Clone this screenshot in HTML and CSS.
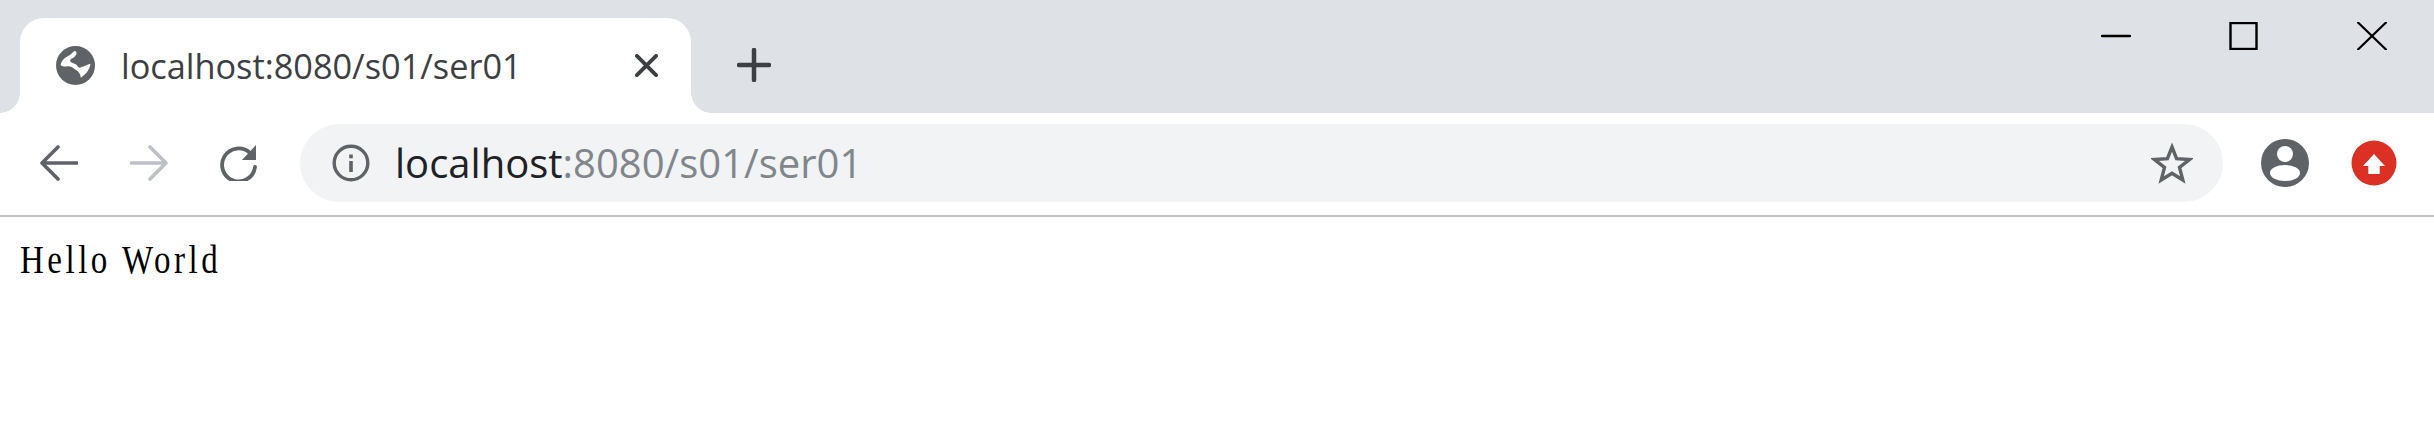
FILE: index.html
```html
<!DOCTYPE html>
<html lang="en">
<head>
<meta charset="utf-8">
<title>localhost:8080/s01/ser01</title>
<link rel="stylesheet" href="styles.css">
</head>
<body>
<header class="chrome">
  <div class="tabstrip">
    <div class="tab">
      <svg class="favicon" viewBox="17 16 118 118"><circle cx="76" cy="75" r="59" fill="#5f6368"/><path fill="#fff" d="M31 74C33 58 46 50 58 44C64 40 68 34 74 30C84 36 78 46 68 52C58 56 58 62 64 66L78 72C82 76 84 80 88 82C98 80 108 74 121 70C120 86 108 102 92 112C92 102 86 92 74 86C66 80 60 76 48 78C42 79 36 77 31 74Z"/></svg>
      <span class="tab-title">localhost:8080/s01/ser01</span>
      <svg class="tab-close" viewBox="0 0 24 24"><path d="M2 2L22 22M22 2L2 22" stroke="#3c4043" stroke-width="4" stroke-linecap="round" fill="none"/></svg>
    </div>
    <svg class="new-tab" viewBox="0 0 34 34"><path d="M17 2V32M2 17H32" stroke="#3c4043" stroke-width="4.5" stroke-linecap="round" fill="none"/></svg>
    <div class="window-controls">
      <svg class="win-icon" viewBox="0 0 30 28"><path d="M1 14H29" stroke="#000" stroke-width="2.4" stroke-linecap="round"/></svg>
      <svg class="win-icon" viewBox="0 0 30 28"><rect x="1.5" y="1" width="26" height="26" fill="none" stroke="#000" stroke-width="2.4"/></svg>
      <svg class="win-icon" viewBox="0 0 30 28"><path d="M1 0.5L29 27.5M29 0.5L1 27.5" stroke="#000" stroke-width="2.2" stroke-linecap="round"/></svg>
    </div>
  </div>
  <div class="toolbar">
    <svg class="nav-icon" viewBox="0 0 38 36"><path d="M37 18H3M18 2L2 18L18 34" stroke="#5f6368" stroke-width="3.6" stroke-linecap="round" stroke-linejoin="round" fill="none"/></svg>
    <svg class="nav-icon" viewBox="0 0 38 36"><path d="M1 18H35M20 2L36 18L20 34" stroke="#bdc1c6" stroke-width="3.6" stroke-linecap="round" stroke-linejoin="round" fill="none"/></svg>
    <svg class="nav-icon" viewBox="0 0 38 36"><path d="M30 8A16.5 16.5 0 1 0 35 22" stroke="#5f6368" stroke-width="3.8" stroke-linecap="round" fill="none"/><path d="M36 0V15H22Z" fill="#5f6368"/></svg>
    <div class="omnibox">
      <svg class="info-icon" viewBox="0 0 38 38"><circle cx="19" cy="19" r="16.8" stroke="#5f6368" stroke-width="3.4" fill="none"/><rect x="17.2" y="17" width="3.6" height="11" fill="#5f6368"/><rect x="17.2" y="10.5" width="3.6" height="3.8" fill="#5f6368"/></svg>
      <span class="url"><span class="url-host">localhost</span>:8080/s01/ser01</span>
      <svg class="star-icon" viewBox="0 0 42 42"><path d="M21 5L25.6 16.6L38.5 17.5L28.5 25.4L31.8 38L21 31.2L10.2 38L13.5 25.4L3.5 17.5L16.4 16.6Z" stroke="#5f6368" stroke-width="3.4" stroke-linejoin="miter" fill="none"/></svg>
    </div>
    <svg class="profile-icon" viewBox="0 0 48 48"><circle cx="24" cy="24" r="24" fill="#5f6368"/><circle cx="24" cy="15" r="8" fill="#fff"/><ellipse cx="24" cy="34" rx="15" ry="8" fill="#fff"/></svg>
    <svg class="update-icon" viewBox="0 0 46 46"><circle cx="23" cy="23" r="22.5" fill="#dc3025"/><path d="M23 14L34 26H28.7V34H17.3V26H12Z" fill="#fff"/></svg>
  </div>
</header>
<main class="content">
  <pre class="hello">Hello World</pre>
</main>
</body>
</html>
```
FILE: styles.css
```css
* { box-sizing: border-box; }
html, body { margin: 0; padding: 0; background: #fff; }
body { width: 2434px; height: 442px; overflow: hidden; }

.chrome { display: flex; flex-direction: column; }

.tabstrip {
  display: flex;
  align-items: flex-start;
  height: 113px;
  background: #dee1e6;
  padding: 18px 0 0 20px;
}
.tab {
  position: relative;
  display: flex;
  align-items: center;
  width: 671px;
  height: 95px;
  padding: 0 33px 0 36px;
  background: #fff;
  border-radius: 24px 24px 0 0;
}
.tab::before,
.tab::after {
  content: "";
  position: absolute;
  bottom: 0;
  width: 20px;
  height: 20px;
}
.tab::before { left: -20px; background: radial-gradient(circle at 0 0, #dee1e6 19.5px, #fff 20px); }
.tab::after { right: -20px; background: radial-gradient(circle at 100% 0, #dee1e6 19.5px, #fff 20px); }

.favicon { width: 39px; height: 39px; flex: none; margin-bottom: 1px; }
.tab-title {
  flex: 1;
  margin-left: 26px;
  font: 34.3px "Open Sans", "Noto Sans", sans-serif;
  color: #3c4043;
  white-space: nowrap;
}
.tab-close { width: 23px; height: 23px; flex: none; }
.new-tab { width: 34px; height: 34px; flex: none; margin: 30px 0 0 46px; }

.window-controls {
  display: flex;
  gap: 98px;
  margin: 4px 0 0 auto;
  padding-right: 47px;
}
.win-icon { width: 30px; height: 28px; display: block; }

.toolbar {
  display: flex;
  align-items: center;
  height: 104px;
  padding: 0 0 2px 40px;
  background: #fff;
  border-bottom: 2px solid #c4c4c4;
}
.nav-icon { width: 38px; height: 36px; flex: none; margin-right: 52px; }
.nav-icon:nth-of-type(3) { margin-right: 42px; }

.omnibox {
  display: flex;
  align-items: center;
  width: 1923px;
  height: 78px;
  padding: 0 30px 0 32px;
  background: #f1f3f4;
  border-radius: 39px;
}
.info-icon { width: 38px; height: 38px; flex: none; }
.url {
  flex: 1;
  margin-left: 25px;
  padding-bottom: 2px;
  font: 40px "Open Sans", "Noto Sans", sans-serif;
  color: #80868b;
  white-space: nowrap;
}
.url-host { color: #202124; }
.star-icon { width: 42px; height: 42px; flex: none; }

.profile-icon { width: 48px; height: 48px; flex: none; margin-left: 38px; }
.update-icon { width: 46px; height: 46px; flex: none; margin-left: 42px; }

.content { padding: 19px 0 0 20px; }
.hello {
  margin: 0;
  font: 33px/40px "Liberation Serif", serif;
  letter-spacing: 3.5px;
  color: #000;
  transform: scaleY(1.2);
  transform-origin: left top;
}
```
